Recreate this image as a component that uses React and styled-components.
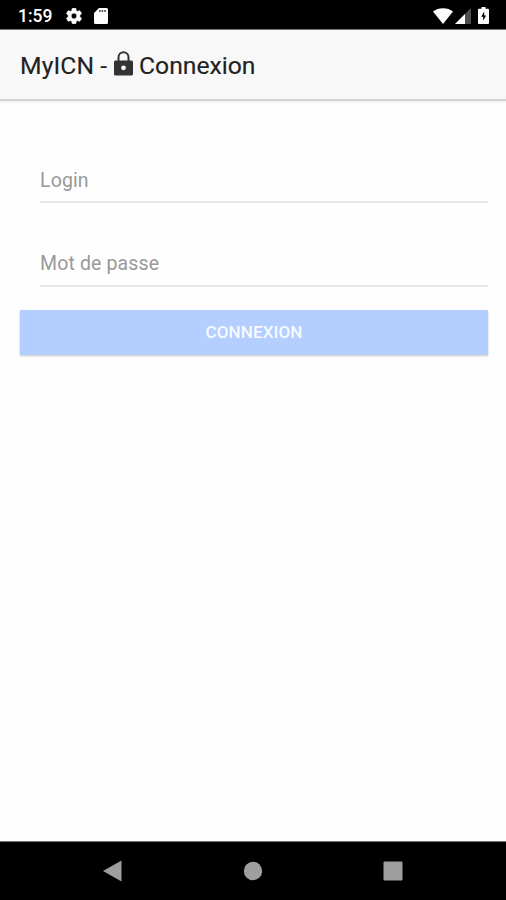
import React from 'react';
import styled, { createGlobalStyle } from 'styled-components';

const GlobalStyle = createGlobalStyle`
  * {
    box-sizing: border-box;
  }

  body {
    margin: 0;
    background-color: #fefefe;
    font-family: Roboto, "Liberation Sans", sans-serif;
  }
`;

const Screen = styled.div`
  display: flex;
  flex-direction: column;
  height: 100vh;
  overflow: hidden;
`;

const StatusBar = styled.div`
  flex: none;
  display: flex;
  align-items: center;
  justify-content: space-between;
  height: 30px;
  padding: 2px 17px 0 18px;
  color: #ffffff;
  background-color: #000000;
  border-bottom: 1px solid #777777;
`;

const Clock = styled.span`
  width: 48px;
  font-size: 17.5px;
  font-weight: 500;
  line-height: 20px;
`;

const StatusGroup = styled.div`
  display: flex;
  align-items: center;
`;

const StatusIcon = styled.svg`
  display: block;
  margin-left: ${props => props.$gap || 0}px;
  fill: #ffffff;
`;

const Header = styled.header`
  flex: none;
  display: flex;
  align-items: center;
  height: 71px;
  padding: 2px 20px 0;
  color: #222222;
  font-size: 24.7px;
  font-weight: 400;
  line-height: 30px;
  white-space: pre;
  background-color: #f8f8f8;
  border-bottom: 2px solid #d2d2d2;
  box-shadow: 0 1px 2px rgba(0, 0, 0, 0.08);
  -webkit-text-stroke: 0.15px #222222;
`;

const TitleText = styled.span`
  letter-spacing: ${props => props.$spacing || 0}px;
`;

const AppName = styled(TitleText)`
  width: 88px;
`;

const LockIcon = styled.svg`
  display: block;
  margin: -4px 6px 0 6px;
`;

const Form = styled.form`
  flex: 1;
  padding: 58px 18px 0 20px;
`;

const Field = styled.label`
  display: flex;
  height: 44px;
  margin: 0 0 40px 20px;
  padding-top: 10px;
  color: #999999;
  font-size: 19.5px;
  line-height: 24px;
  letter-spacing: 0.13px;
  border-bottom: 2px solid #eaeaea;

  &:nth-of-type(2) {
    margin-bottom: 23px;
    padding-top: 9px;
  }
`;

const SubmitButton = styled.button`
  display: block;
  width: 100%;
  height: 45px;
  padding: 0 0 1px;
  border: 0;
  color: #f8fbff;
  font-family: inherit;
  font-size: 17px;
  font-weight: 500;
  line-height: 42px;
  letter-spacing: 0.1px;
  text-transform: uppercase;
  background-color: #b3ceff;
  box-shadow: 0 1px 2px rgba(0, 0, 0, 0.22);
`;

const NavBar = styled.nav`
  flex: none;
  display: flex;
  justify-content: center;
  align-items: center;
  gap: 120px;
  height: 59px;
  padding-bottom: 1px;
  background-color: #000000;
  border-top: 1px solid #777777;
`;

const NavIcon = styled.svg`
  display: block;
  fill: #9e9e9e;
`;

const App = () => {
    return (
        <>
            <GlobalStyle />
            <Screen>

                <StatusBar>
                    <StatusGroup>
                        <Clock>1:59</Clock>
                        <StatusIcon width="16" height="16" viewBox="2 2 20 20">
                            <path d="M19.14 12.94c.04-.3.06-.61.06-.94 0-.32-.02-.64-.07-.94l2.03-1.58c.18-.14.23-.41.12-.61l-1.92-3.32c-.12-.22-.37-.29-.59-.22l-2.39.96c-.5-.38-1.03-.7-1.62-.94l-.36-2.54c-.04-.24-.24-.41-.48-.41h-3.84c-.24 0-.43.17-.47.41l-.36 2.54c-.59.24-1.13.57-1.62.94l-2.39-.96c-.22-.08-.47 0-.59.22L2.74 8.87c-.12.21-.08.47.12.61l2.03 1.58c-.05.3-.09.63-.09.94s.02.64.07.94l-2.03 1.58c-.18.14-.23.41-.12.61l1.92 3.32c.12.22.37.29.59.22l2.39-.96c.5.38 1.03.7 1.62.94l.36 2.54c.05.24.24.41.48.41h3.84c.24 0 .44-.17.47-.41l.36-2.54c.59-.24 1.13-.56 1.62-.94l2.39.96c.22.08.47 0 .59-.22l1.92-3.32c.12-.22.07-.47-.12-.61l-2.01-1.58zM12 15.6c-1.98 0-3.6-1.62-3.6-3.6s1.62-3.6 3.6-3.6 3.6 1.62 3.6 3.6-1.62 3.6-3.6 3.6z" stroke="#ffffff" strokeWidth="0.8" />
                        </StatusIcon>
                        <StatusIcon $gap={12} width="14" height="16" viewBox="0 0 14 16">
                            <path d="M5 0h7.5A1.5 1.5 0 0 1 14 1.5v13a1.5 1.5 0 0 1-1.5 1.5h-11A1.5 1.5 0 0 1 0 14.5V5z" />
                            <path d="M5 2h1.6v2H5zM7.6 2h1.6v2H7.6zM10.2 2h1.6v2h-1.6z" fill="#555555" />
                        </StatusIcon>
                    </StatusGroup>
                    <StatusGroup>
                        <StatusIcon width="20" height="16" viewBox="0 0 21 16" preserveAspectRatio="none">
                            <path d="M0 3.6C2.8 1.5 6.3.3 10.5.3S18.2 1.5 21 3.6L10.5 16z" />
                        </StatusIcon>
                        <StatusIcon $gap={2} width="16" height="16" viewBox="0 0 16 16">
                            <path d="M0 16L16 0v16z" fill="#4d4d4d" />
                            <path d="M0 16L10 6v10z" />
                        </StatusIcon>
                        <StatusIcon $gap={7} width="11" height="17" viewBox="0 0 11 17">
                            <path d="M3.5 0h4v1.7H10a1 1 0 0 1 1 1V16a1 1 0 0 1-1 1H1a1 1 0 0 1-1-1V2.7a1 1 0 0 1 1-1h2.5z" />
                            <path d="M6.2 4.5L3.2 9.7h2v4.1l2.9-5.3H6.2z" fill="#000000" />
                        </StatusIcon>
                    </StatusGroup>
                </StatusBar>

                <Header>
                    <AppName $spacing={0.1}>MyICN -</AppName>
                    <LockIcon width="19" height="25" viewBox="0 0 19 25">
                        <path d="M4.5 11V6.3a5 5 0 0 1 10 0V11" fill="none" stroke="#333333" strokeWidth="2" />
                        <rect y="9.5" width="19" height="15" rx="1.5" fill="#333333" />
                        <circle cx="9.5" cy="16.8" r="2.4" fill="#f8f8f8" />
                    </LockIcon>
                    <TitleText>Connexion</TitleText>
                </Header>

                <Form>
                    <Field>Login</Field>
                    <Field>Mot de passe</Field>
                    <SubmitButton type="button">Connexion</SubmitButton>
                </Form>

                <NavBar>
                    <NavIcon width="20" height="22" viewBox="0 0 20 22">
                        <path d="M0 11L18.5.5v21z" />
                    </NavIcon>
                    <NavIcon width="20" height="20" viewBox="0 0 20 20">
                        <circle cx="10" cy="10" r="9.2" />
                    </NavIcon>
                    <NavIcon width="20" height="20" viewBox="0 0 20 20">
                        <rect x="0.5" y="0.5" width="19" height="19" rx="1" />
                    </NavIcon>
                </NavBar>

            </Screen>
        </>
    );
};

export default App;
